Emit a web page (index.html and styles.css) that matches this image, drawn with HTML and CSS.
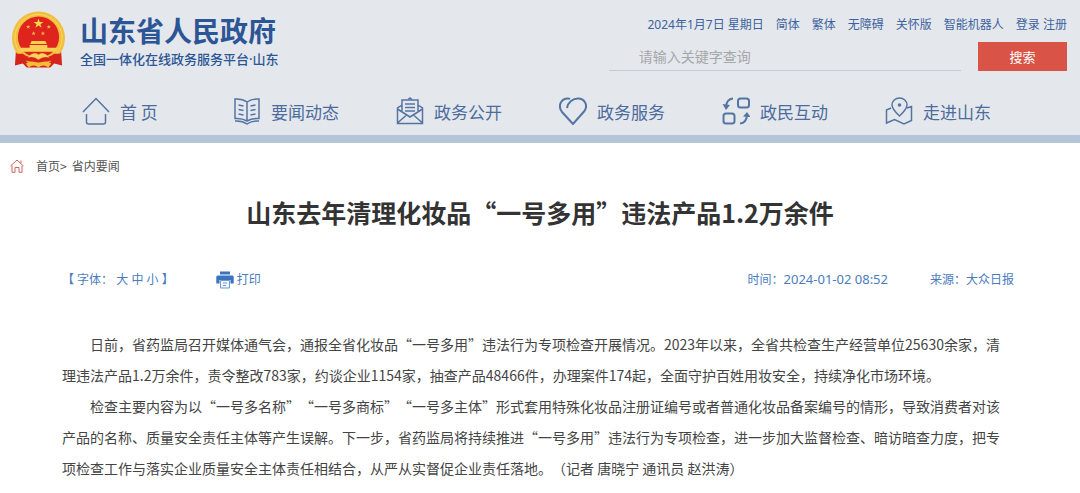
FILE: index.html
```html
<!DOCTYPE html>
<html lang="zh-CN">
<head>
    <meta charset="utf-8">
    <meta name="viewport" content="width=device-width, initial-scale=1.0">
    <title>山东去年清理化妆品“一号多用”违法产品1.2万余件</title>
    <link rel="stylesheet" href="styles.css">
</head>
<body>
    <header class="header">
        <div class="header-top">
            <a class="logo" href="#">
                <svg class="emblem" viewBox="0 0 56 58" aria-hidden="true">
                    <path d="M5 40 L4 55 L12 53 L16 57 L40 57 L44 53 L52 55 L51 40 Z" fill="#d6241d"/>
                    <circle cx="28" cy="27" r="27" fill="#f0bf3c"/>
                    <circle cx="28" cy="27" r="24" fill="none" stroke="#f8d768" stroke-width="1"/>
                    <circle cx="28" cy="26" r="21" fill="#df241d"/>
                    <path d="M28 7 L29.200 10.700 L33 10.700 L30 13 L31.200 16.500 L28 14.300 L24.800 16.500 L26 13 L23 10.700 L26.800 10.700 Z" fill="#f9d648"/>
                    <g fill="#f5bd3f">
                        <path id="star" d="M17.500 13.500 L18.100 15 L19.700 15 L18.400 16 L18.900 17.600 L17.500 16.600 L16.100 17.600 L16.600 16 L15.300 15 L16.900 15 Z"/>
                        <use href="#star" x="21"/>
                        <use href="#star" x="5.500" y="6.500"/>
                        <use href="#star" x="15" y="6.500"/>
                    </g>
                    <path d="M21 30 h14 l1.500 3 h-17 Z M19 34 h18 v3 h11 l-2 4 H10 l-2 -4 h11 Z" fill="#f8cf52"/>
                    <path d="M6 43 L12 43 Q20 50 28 43 Q36 50 44 43 L50 43 L47 52 L40 50 Q28 54 16 50 L9 52 Z" fill="#d6241d"/>
                    <path d="M17 47 Q23 40 28 44 Q33 40 39 47 Q33 45 28 49 Q23 45 17 47 Z" fill="#f8d45c"/>
                    <path d="M15 53 Q21 49 28 53 Q35 49 41 53 L38 57 Q33 53 28 57 Q23 53 18 57 Z" fill="#f3bd36"/>
                </svg>
                <span class="logo-text">
                    <span class="logo-name">山东省人民政府</span>
                    <span class="logo-sub">全国一体化在线政务服务平台·山东</span>
                </span>
            </a>
            <div class="header-tools">
                <div class="top-links">
                    <span>2024年1月7日 星期日</span>
                    <a href="#">简体</a>
                    <a href="#">繁体</a>
                    <a href="#">无障碍</a>
                    <a href="#">关怀版</a>
                    <a href="#">智能机器人</a>
                    <span class="account"><a href="#">登录</a> <a href="#">注册</a></span>
                </div>
                <form class="search">
                    <input type="text" placeholder="请输入关键字查询" aria-label="请输入关键字查询">
                    <button type="button">搜索</button>
                </form>
            </div>
        </div>

        <nav class="nav">
            <a href="#">
                <svg viewBox="0 0 28 28"><path d="M1 15 L14 1.500 L27 15 M4.500 17 V25 Q4.500 27 6.500 27 H21.500 Q23.500 27 23.500 25 V17"/></svg>
                <span>首 页</span>
            </a>
            <a href="#">
                <svg viewBox="0 0 28 28"><path d="M14 5 Q9 1.500 2 2 V21.500 Q9 21 14 24 Q19 21 26 21.500 V2 Q19 1.500 14 5 V24 M2 24 Q9 23.500 14 27 Q19 23.500 26 24 M5.500 8 l5 1 M5.500 12.500 l5 1 M5.500 17 l5 1 M22.500 8 l-5 1 M22.500 12.500 l-5 1 M22.500 17 l-5 1"/></svg>
                <span>要闻动态</span>
            </a>
            <a href="#">
                <svg viewBox="0 0 28 28"><path d="M6 15 V3 H22 V15 M6 8 L1.500 11 V26.500 H26.500 V11 L22 8 M1.500 12 L14 20 L26.500 12 M1.500 26 L10.500 18 M26.500 26 L17.500 18 M9 7 H19 M9 10.500 H19 M9 14 H19"/><path d="M12 2.500 L14 1 L16 2.500"/></svg>
                <span>政务公开</span>
            </a>
            <a href="#">
                <svg class="bold" viewBox="0 0 28 28"><path d="M8 11 C9 5 14 1.500 19 1.500 C26 1.500 29.500 9 25 14.500 L14 27 L3 15 C-1.500 9 2 2 8 1.500 Q10 1.300 11 2"/></svg>
                <span>政务服务</span>
            </a>
            <a href="#">
                <svg class="bold" viewBox="0 0 28 28"><rect x="16" y="1.500" width="11" height="9" rx="2.500"/><rect x="1.500" y="16.500" width="11" height="10" rx="2.500"/><path d="M11 1.500 Q4.500 2 4 10 M18 26.500 Q24.500 26 25 18"/><path class="solid" d="M0.500 7 L8 8 L4 13 Z M28.500 20 L21 19.500 L25 15 Z"/></svg>
                <span>政民互动</span>
            </a>
            <a href="#">
                <svg viewBox="0 0 28 28"><path d="M6 11 L1.500 13 V26 L9.500 22.500 L19 27 L26.500 23.500 V9.500 L22 11 M14.500 19 Q7 12 7 8 A7.500 7 0 0 1 22 8 Q22 12 14.500 19 Z"/><circle class="solid" cx="14.500" cy="8" r="1.800"/></svg>
                <span>走进山东</span>
            </a>
        </nav>
    </header>

    <div class="breadcrumb">
        <svg viewBox="0 0 14 14" aria-hidden="true"><path d="M0.500 7 L7 1 L13.500 7 M11 4 V1.500 M2 6.500 V13.300 H5 V8.500 H9 V13.300 H12 V6.500"/></svg>
        <div><a href="#">首页</a>&gt;</div>
        <a href="#">省内要闻</a>
    </div>

    <main class="article">
        <h1>山东去年清理化妆品“一号多用”违法产品1.2万余件</h1>
        <div class="meta">
            <div class="font-size">【 字体： <button type="button">大</button> <button type="button">中</button> <button type="button">小</button> 】</div>
            <button type="button" class="print">
                <svg viewBox="0 0 18 18" aria-hidden="true"><path d="M4 0.500 H14 V3.500 H4 Z M1.500 4.500 H16.500 Q17.700 4.500 17.700 6 V12.500 H14.500 V9 H3.500 V12.500 H0.300 V6 Q0.300 4.500 1.500 4.500 Z" fill="#3b73bd"/><path d="M4.500 9.500 H13.500 V17 H4.500 Z" fill="#f3f7fd" stroke="#6c9bd5"/><path d="M7 12 H11 M7 14.500 H10" stroke="#6c9bd5"/></svg>
                打印
            </button>
            <div class="time">时间：<time datetime="2024-01-02T08:52">2024-01-02 08:52</time></div>
            <div>来源：大众日报</div>
        </div>
        <div class="content">
            <p>日前，省药监局召开媒体通气会，通报全省化妆品“一号多用”违法行为专项检查开展情况。2023年以来，全省共检查生产经营单位25630余家，清理违法产品1.2万余件，责令整改783家，约谈企业1154家，抽查产品48466件，办理案件174起，全面守护百姓用妆安全，持续净化市场环境。</p>
            <p>检查主要内容为以“一号多名称”“一号多商标”“一号多主体”形式套用特殊化妆品注册证编号或者普通化妆品备案编号的情形，导致消费者对该产品的名称、质量安全责任主体等产生误解。下一步，省药监局将持续推进“一号多用”违法行为专项检查，进一步加大监督检查、暗访暗查力度，把专项检查工作与落实企业质量安全主体责任相结合，从严从实督促企业责任落地。（记者 唐晓宁 通讯员 赵洪涛）</p>
        </div>
    </main>
</body>
</html>
```
FILE: styles.css
```css
* {
    box-sizing: border-box;
    margin: 0;
    padding: 0;
}

body {
    background: #fff;
    color: #444;
    font-family: "Noto Sans CJK SC", "Noto Sans", sans-serif;
    font-size: 12px;
}

a {
    color: inherit;
    text-decoration: none;
}

button {
    border: none;
    background: none;
    color: inherit;
    font: inherit;
    cursor: pointer;
}

/* header */
.header {
    background: #e4e8ec;
    border-bottom: 8px solid #b4c4d9;
}

.header-top {
    display: flex;
    justify-content: space-between;
    padding: 11px 13px 0 11px;
}

.logo {
    display: flex;
    gap: 14px;
    color: #2c5596;
}

.emblem {
    width: 55px;
    height: 58px;
}

.logo-text {
    display: flex;
    flex-direction: column;
    font-weight: bold;
}

.logo-name {
    font-size: 28px;
    line-height: 38px;
}

.logo-sub {
    font-family: "Noto Sans", "Noto Sans CJK SC", sans-serif;
    font-size: 13px;
    line-height: 20px;
    font-weight: 500;
}

.header-tools {
    width: 43.4%;
}

.top-links {
    display: flex;
    justify-content: flex-end;
    gap: 12px;
    color: #3d62a0;
    font-family: "Noto Sans", "Noto Sans CJK SC", sans-serif;
    line-height: 28px;
    white-space: nowrap;
}

.search {
    display: flex;
    gap: 17px;
    margin-top: 3px;
}

.search input {
    flex: 1;
    min-width: 0;
    height: 29px;
    padding: 0 30px;
    border: none;
    border-bottom: 1px solid #c3c8d2;
    background: none;
    font: inherit;
    font-size: 14px;
    outline: none;
}

.search input::placeholder {
    color: #a5a7aa;
}

.search button {
    width: 89px;
    height: 29px;
    background: #d95346;
    color: #fff;
    font-size: 13px;
}

/* main menu */
.nav {
    display: flex;
    justify-content: space-between;
    padding: 16px 89px 0 82px;
    height: 64px;
    color: #4d6c9e;
    font-size: 17px;
}

.nav a {
    display: flex;
    align-items: center;
    gap: 10px;
    height: 48px;
    white-space: nowrap;
}

.nav a:first-child {
    min-width: 94px;
}

.nav svg {
    width: 28px;
    height: 28px;
    fill: none;
    stroke: #5474a4;
    stroke-width: 1.5;
}

.nav .bold {
    stroke-width: 2;
}

.nav .solid {
    fill: #5474a4;
    stroke: none;
}

/* breadcrumb */
.breadcrumb {
    display: flex;
    align-items: center;
    gap: 5px;
    padding: 13px 10px 0;
    line-height: 20px;
    color: #555;
}

.breadcrumb svg {
    width: 14px;
    height: 14px;
    margin-right: 7px;
    fill: none;
    stroke: #c9675c;
}

/* article */
.article {
    padding: 0 62px;
}

h1 {
    margin-top: 17px;
    color: #333;
    font-size: 25px;
    line-height: 38px;
    text-align: center;
}

.meta {
    display: flex;
    align-items: center;
    gap: 42px;
    margin-top: 38px;
    padding-right: 4px;
    color: #4a7cbd;
    font-family: "Noto Sans", "Noto Sans CJK SC", sans-serif;
    line-height: 20px;
}

.print {
    display: flex;
    align-items: center;
    gap: 3px;
}

.print svg {
    width: 18px;
    height: 18px;
    fill: none;
}

.time {
    margin-left: auto;
}

.time time {
    font-size: 13px;
}

.content {
    margin-top: 39px;
    padding-right: 8px;
    font-size: 14px;
    line-height: 31px;
    text-spacing-trim: space-all;
}

.content p {
    text-indent: 2em;
}
```
